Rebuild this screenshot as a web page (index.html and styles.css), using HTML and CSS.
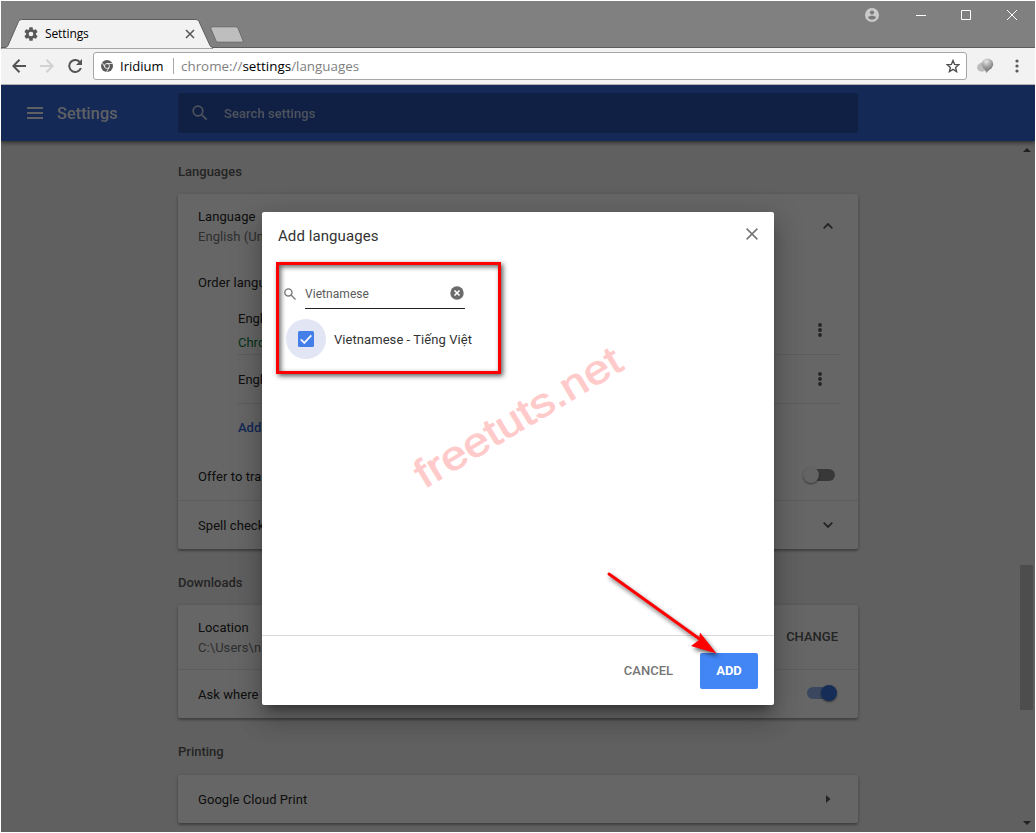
FILE: index.html
```html
<!DOCTYPE html>
<html lang="en">
<head>
<meta charset="utf-8">
<title>Settings</title>
<link rel="stylesheet" href="styles.css">
</head>
<body>
<div class="window">
  <header class="titlebar">
    <div class="tab">
      <svg class="tab-shape" width="212" height="30" viewBox="0 0 212 30"><path d="M0 28.500H4Q6 28.500 7 26.500L17.500 2.500Q18.500 .5 20.500 .5H195Q197 .5 198 2.500L209 26.500Q210 28.500 212 28.500V30H0Z" fill="#f2f2f2" stroke="#5d5d5d"/></svg>
      <svg class="tab-gear" width="18" height="18" viewBox="0 0 24 24" fill="#5a5a5a"><path d="M19.430 12.980c.04-.32.07-.64.07-.98s-.03-.66-.07-.98l2.110-1.650a.5.5 0 0 0 .12-.64l-2-3.460a.5.5 0 0 0-.61-.22l-2.490 1a7.300 7.300 0 0 0-1.690-.98l-.38-2.650A.49.49 0 0 0 14 2h-4a.49.49 0 0 0-.49.42l-.38 2.650c-.61.25-1.170.59-1.690.98l-2.490-1a.49.49 0 0 0-.61.22l-2 3.460a.49.49 0 0 0 .12.64l2.110 1.650a8 8 0 0 0 0 1.960l-2.110 1.650a.5.5 0 0 0-.12.64l2 3.460c.12.22.39.3.61.22l2.490-1c.52.4 1.080.73 1.690.98l.38 2.650c.03.24.24.42.49.42h4c.25 0 .46-.18.49-.42l.38-2.650c.61-.25 1.170-.59 1.690-.98l2.490 1c.23.090.49 0 .61-.22l2-3.460a.5.5 0 0 0-.12-.64zM12 15.500a3.500 3.500 0 1 1 0-7 3.500 3.500 0 0 1 0 7z"/></svg>
      <span class="tab-title">Settings</span>
      <svg class="tab-close" width="10" height="10" viewBox="0 0 10 10" fill="none" stroke="#5a5a5a" stroke-width="1.600"><path d="M1 1l8 8M9 1l-8 8"/></svg>
    </div>
    <svg class="new-tab" width="34" height="18" viewBox="0 0 34 18"><path d="M2.500 .8H26Q27.500 .8 28.200 2.500L33 14.500Q33.500 16.200 31.500 16.200H8Q6.500 16.200 5.800 14.500L.8 2.500Q.4 .8 2.500 .8Z" fill="#bebebe" stroke="#6b6b6b"/></svg>
    <div class="window-controls">
      <svg width="14" height="14" viewBox="0 0 14 14"><circle cx="7" cy="7" r="7" fill="#cacaca"/><circle cx="7" cy="4.500" r="2.100" fill="#7b7b7b"/><path d="M3 9.600C3.500 8.300 5 7.800 7 7.800s3.500.5 4 1.800C10.200 11 8.800 11.700 7 11.700S3.800 11 3 9.600Z" fill="#7b7b7b"/></svg>
      <svg width="10" height="10" viewBox="0 0 10 10" stroke="#fff"><path d="M0 5.500h10"/></svg>
      <svg width="10" height="10" viewBox="0 0 10 10" stroke="#fff" fill="none"><path d="M.5.5h9v9h-9z"/></svg>
      <svg width="10" height="10" viewBox="0 0 10 10" stroke="#fff"><path d="M0 0l10 10M10 0L0 10"/></svg>
    </div>
  </header>
  <div class="toolbar">
    <svg class="nav" width="14" height="14" viewBox="0 0 14 14" fill="none" stroke="#545454" stroke-width="2"><path d="M14 7H1.500M7.500 .8L1.300 7l6.200 6.200"/></svg>
    <svg class="nav" width="14" height="14" viewBox="0 0 14 14" fill="none" stroke="#d2d2d2" stroke-width="2"><path d="M0 7h12.500M6.500 .8L12.700 7l-6.200 6.200"/></svg>
    <svg class="nav" width="14" height="14" viewBox="0 0 14 14"><path d="M12 3.300A6 6 0 1 0 12.900 9" fill="none" stroke="#545454" stroke-width="2"/><path d="M14 0v6H8z" fill="#545454"/></svg>
    <div class="omnibox">
      <svg width="12" height="12" viewBox="0 0 12 12"><circle cx="6" cy="6" r="6" fill="#5a5a5a"/><circle cx="6" cy="6" r="2.500" fill="#5a5a5a" stroke="#fff" stroke-width=".8"/><path d="M6 3.500h5.500M3.900 7.300L1.200 2.700M8.200 7.300L5.500 12" stroke="#fff" stroke-width=".8"/></svg>
      <span class="origin">Iridium</span>
      <span class="url">chrome://<b>settings</b>/languages</span>
      <svg class="star" width="14" height="14" viewBox="0 0 14 14" fill="none" stroke="#4f4f4f" stroke-width="1.400"><path d="M7 1.500l1.600 3.900 4.200.3-3.200 2.700 1 4.200L7 10.400l-3.600 2.200 1-4.200L1.200 5.700l4.200-.3z"/></svg>
    </div>
    <svg class="extension" width="17" height="16" viewBox="0 0 17 16">
      <defs><radialGradient id="ball" cx=".4" cy=".25" r=".8"><stop offset="0" stop-color="#e8e8e8"/><stop offset=".5" stop-color="#aaa"/><stop offset="1" stop-color="#777"/></radialGradient></defs>
      <ellipse cx="5.500" cy="9" rx="5.500" ry="4.500" fill="#bcbcbc" transform="rotate(-20 5.500 9)"/><path d="M7 10l2.500 5 3.500-4z" fill="#898989"/><circle cx="10.500" cy="6.300" r="5.700" fill="url(#ball)"/>
    </svg>
    <svg class="menu-dots" width="4" height="14" viewBox="0 0 4 14" fill="#5a5a5a"><circle cx="2" cy="2" r="1.600"/><circle cx="2" cy="7" r="1.600"/><circle cx="2" cy="12" r="1.600"/></svg>
  </div>

  <div class="page">
    <div class="app-bar">
      <svg class="hamburger" width="16" height="12" viewBox="0 0 16 12" fill="#fff"><path d="M0 0h16v2H0zM0 5h16v2H0zM0 10h16v2H0z"/></svg>
      <h1>Settings</h1>
      <div class="search">
        <svg width="16" height="16" viewBox="0 0 16 16" fill="none" stroke="#fff" stroke-width="1.700"><circle cx="6" cy="6" r="4.800"/><path d="M9.600 9.600l5 5"/></svg>
        <span>Search settings</span>
      </div>
    </div>
    <main class="content">
      <h2>Languages</h2>
      <section class="card">
        <div class="row tall">
          <div><div>Language</div><div class="secondary">English (Un</div></div>
          <svg class="chevron" width="10" height="6" viewBox="0 0 10 6"><path d="M.7 5.300L5 1l4.300 4.300"/></svg>
        </div>
        <div class="row"><span>Order langu</span></div>
        <div class="list">
          <div class="item">
            <div><div>Engl</div><div class="displayed">Chro</div></div>
            <svg class="dots" width="4" height="14" viewBox="0 0 4 14"><circle cx="2" cy="2" r="1.900"/><circle cx="2" cy="7" r="1.900"/><circle cx="2" cy="12" r="1.900"/></svg>
          </div>
          <div class="item">
            <span>Engl</span>
            <svg class="dots" width="4" height="14" viewBox="0 0 4 14"><circle cx="2" cy="2" r="1.900"/><circle cx="2" cy="7" r="1.900"/><circle cx="2" cy="12" r="1.900"/></svg>
          </div>
          <div class="link">Add</div>
        </div>
        <div class="row line-below"><span>Offer to tra</span><span class="toggle"></span></div>
        <div class="row"><span>Spell check</span>
          <svg class="chevron" width="10" height="6" viewBox="0 0 10 6"><path d="M.7.7L5 5 9.300.7"/></svg>
        </div>
      </section>
      <h2>Downloads</h2>
      <section class="card">
        <div class="row tall line-below">
          <div><div>Location</div><div class="secondary">C:\Users\n</div></div>
          <span class="change">CHANGE</span>
        </div>
        <div class="row"><span>Ask where</span><span class="toggle on"></span></div>
      </section>
      <h2 class="last">Printing</h2>
      <section class="card">
        <div class="row"><span>Google Cloud Print</span>
          <svg class="caret" width="5" height="8" viewBox="0 0 5 8" fill="#5a5a5a"><path d="M0 0l4.500 4L0 8z"/></svg>
        </div>
      </section>
    </main>
    <div class="scrollbar">
      <svg width="8" height="4" viewBox="0 0 8 4" fill="#505050"><path d="M0 4l4-4 4 4z"/></svg>
      <div class="thumb"></div>
      <svg width="8" height="4" viewBox="0 0 8 4" fill="#505050"><path d="M0 0l4 4 4-4z"/></svg>
    </div>
    <div class="backdrop"></div>

    <div class="dialog">
      <div class="dialog-head">
        <span>Add languages</span>
        <svg width="12" height="12" viewBox="0 0 12 12" stroke="#757575" stroke-width="1.500"><path d="M.6.6l10.800 10.800M11.400.6L.6 11.400"/></svg>
      </div>
      <div class="dialog-body">
        <div class="highlight">
          <div class="filter">
            <svg class="filter-icon" width="12" height="12" viewBox="0 0 12 12" fill="none" stroke="#757575" stroke-width="1.300"><circle cx="4.400" cy="4.400" r="3.600"/><path d="M7 7l4.500 4.500"/></svg>
            <div class="field"><span>Vietnamese</span>
              <svg width="14" height="14" viewBox="0 0 14 14"><circle cx="7" cy="7" r="6.700" fill="#6b6b6b"/><path d="M4.500 4.500l5 5M9.500 4.500l-5 5" stroke="#fff" stroke-width="1.600"/></svg>
            </div>
          </div>
          <div class="option">
            <span class="ripple"><svg width="16" height="16" viewBox="0 0 16 16"><rect width="16" height="16" rx="1.500" fill="#437ee9"/><path d="M2.800 8.300l3.500 3.500 7-7.500" fill="none" stroke="#f0f3fc" stroke-width="1.900"/></svg></span>
            <span class="option-label">Vietnamese - Tiếng Việt</span>
          </div>
        </div>
      </div>
      <div class="dialog-foot">
        <span class="cancel">CANCEL</span>
        <span class="add">ADD</span>
      </div>
      <svg class="watermark" width="240" height="170" viewBox="0 0 240 170"><text x="0" y="0" textLength="234" lengthAdjust="spacingAndGlyphs" transform="translate(24.500 159) rotate(-31)">freetuts.net</text></svg>
      <svg class="arrow" width="130" height="110" viewBox="0 0 130 110"><path d="M10 10L102 76" stroke="#f00" stroke-width="3" stroke-linecap="round"/><path d="M117.500 89.500L101 68.500 100 76 92 82z" fill="#f00"/></svg>
    </div>
  </div>
</div>
</body>
</html>
```
FILE: styles.css
```css
* { box-sizing: border-box; }
body { margin: 0; background: #fff; font: 13px/20px Roboto, "Liberation Sans", sans-serif; color: #000; overflow: hidden; }
svg { display: block; flex: none; }
.window { display: flex; flex-direction: column; width: 1036px; height: 833px; padding: 1px; }

.titlebar { height: 47px; flex: none; display: flex; align-items: flex-end; background: #808080; border-bottom: 1px solid #5d5d5d; }
.tab { position: relative; width: 212px; height: 29px; margin-bottom: -1px; display: flex; align-items: center; padding: 0 16px 0 22px; font: 12px/16px "Open Sans", "Noto Sans", sans-serif; }
.tab-shape { position: absolute; left: 0; top: 0; }
.tab-gear, .tab-title, .tab-close { position: relative; }
.tab-gear { width: 16px; height: 16px; }
.tab-title { margin-left: 6px; flex: 1; letter-spacing: -.1px; }
.tab-close { margin-right: 2px; }
.new-tab { margin: 0 0 3px -3px; }
.window-controls { margin-left: auto; align-self: flex-start; height: 28px; padding-right: 18px; display: flex; align-items: center; }
.window-controls svg:nth-child(2) { margin-left: 37px; }
.window-controls svg:nth-child(3) { margin-left: 35px; }
.window-controls svg:nth-child(4) { margin-left: 36px; }

.toolbar { height: 37px; flex: none; display: flex; align-items: center; padding: 0 16px 0 11px; background: #f2f2f2; border-bottom: 1px solid #b2b2b2; }
.nav { margin-right: 14px; }
.omnibox { width: 874px; height: 28px; display: flex; align-items: center; margin-left: -3px; padding: 0 6px 0 7px; background: #fff; border: 1px solid #a6a6a6; border-radius: 3px; font: 14px/20px "Open Sans", "Noto Sans", sans-serif; }
.origin { margin-left: 7px; width: 54px; border-right: 1px solid #a9a9a9; line-height: 16px; font-size: 13px; }
.url { margin-left: 7px; color: #808080; font-size: 13.400px; }
.url b { font-weight: 400; color: #000; }
.star { margin-left: auto; }
.extension { margin-left: 10px; }
.menu-dots { margin-left: auto; }

.page { position: relative; flex: 1; min-height: 0; background: #f1f1f1; overflow: hidden; }
.app-bar { height: 56px; display: flex; align-items: center; background: #3367d6; color: #fff; box-shadow: 0 2px 4px rgba(0,0,0,.5); position: relative; padding-left: 26px; }
.app-bar > * { opacity: .9; }
.app-bar h1 { margin: 0 0 0 14px; width: 121px; padding-top: 2px; font-size: 16.400px; font-weight: 500; }
.app-bar .search { width: 680px; height: 40px; display: flex; align-items: center; padding-left: 14px; background: #2a52ab; border-radius: 2px; font-weight: 500; opacity: 1; }
.search svg, .search span { opacity: .7; }
.search span { margin-left: 16px; padding-top: 2px; letter-spacing: .06px; }
.content { width: 680px; margin-left: 177px; color: #262626; }
h2 { margin: 0; font-size: 13px; font-weight: 500; line-height: 20px; color: #5a5a5a; padding: 24px 0 12px; }
.app-bar + .content h2:first-child { padding-top: 21px; }
.content h2.last { padding-bottom: 13px; }
.card { background: #fff; border-radius: 2px; box-shadow: 0 2px 2px rgba(0,0,0,.24), 0 1px 5px rgba(0,0,0,.2); }
.row { display: flex; align-items: center; justify-content: space-between; height: 48px; padding: 0 20px; letter-spacing: .06px; }
.row > span:first-child:not(.toggle) { padding-top: 2px; }
.tall { height: 64px; line-height: 20px; }
.tall > div { padding-top: 1px; }
.line-below { border-bottom: 1px solid #e8e8e8; height: 49px; }
.tall.line-below { height: 65px; }
.secondary { color: #757575; }
.chevron { margin-right: 5px; fill: none; stroke: #5a5a5a; stroke-width: 1.800; }
.list { margin: 0 18px 0 60px; }
.item { height: 49px; display: flex; align-items: center; justify-content: space-between; padding-right: 18px; border-bottom: 1px solid #e8e8e8; line-height: 24px; }
.item > :first-child { padding-top: 2px; }
.displayed { color: #0b8043; }
.dots { fill: #5a5a5a; }
.link { height: 48px; line-height: 47px; color: #3367d6; font-weight: 500; }
.toggle { position: relative; width: 28px; height: 12px; margin: -2px 3px 0 0; border-radius: 6px; background: #8c8c8c; }
.toggle::after { content: ""; position: absolute; left: -4px; top: -2px; width: 16px; height: 16px; border-radius: 50%; background: #fafafa; box-shadow: 0 1px 2px rgba(0,0,0,.5); }
.toggle.on { margin-right: 3px; background: #92b1ea; }
.toggle.on::after { left: 14px; background: #3972dd; }
.change { font-weight: 500; color: #5a5a5a; letter-spacing: 0; margin-top: -1px; line-height: 19px; }
.caret { margin-right: 7px; }
.scrollbar { position: absolute; right: 1px; top: 56px; width: 15px; height: 691px; display: flex; flex-direction: column; align-items: center; padding: 7px 0 7px; }
.thumb { width: 13px; height: 145px; margin: 413px 0 auto; background: #c1c1c1; }
.backdrop { position: absolute; inset: 0; background: rgba(0,0,0,.6); }

.dialog { position: absolute; left: 261px; top: 127px; width: 512px; height: 493px; display: flex; flex-direction: column; background: #fff; border-radius: 2px; box-shadow: 0 16px 24px 2px rgba(0,0,0,.14), 0 6px 30px 5px rgba(0,0,0,.12), 0 8px 10px -5px rgba(0,0,0,.4); color: #333; }
.dialog-head { height: 50px; display: flex; align-items: center; justify-content: space-between; padding: 0 16px; font-size: 15px; letter-spacing: .08px; }
.dialog-head span { margin-top: -2px; }
.dialog-head svg { margin-top: -6px; }
.dialog-body { flex: 1; padding-left: 14px; }
.highlight { width: 225px; height: 112px; border: 3px solid #f00; box-shadow: 2px 2px 5px rgba(0,0,0,.65), inset 2px 2px 5px rgba(0,0,0,.6); padding: 14px 0 0 5px; }
.filter { display: flex; align-items: center; height: 30px; }
.filter-icon { margin: -1px 9px 0 0; }
.field { width: 160px; height: 30px; display: flex; align-items: center; justify-content: space-between; border-bottom: 1px solid #212121; font-size: 12px; letter-spacing: .06px; color: #5a5a5a; padding: 0 1px 1px 0; }
.field span { padding-top: 2px; }
.option { display: flex; align-items: center; margin: 10px 0 0 2px; }
.option-label { padding-top: 2px; letter-spacing: .06px; }
.ripple { width: 40px; height: 40px; border-radius: 50%; background: #e1e5f4; display: flex; align-items: center; justify-content: center; margin-right: 8px; }
.dialog-foot { height: 70px; display: flex; align-items: center; justify-content: flex-end; padding-right: 16px; border-top: 1px solid #dadada; font-weight: 500; }
.cancel { color: #757575; margin-right: 27px; }
.add { width: 58px; height: 36px; line-height: 36px; text-align: center; background: #4285f4; color: #fff; border-radius: 2px; font-weight: 700; }
.watermark { position: absolute; left: 138px; top: 118px; overflow: visible; font: 40px "Liberation Sans", Arial, sans-serif; fill: #ffcaca; stroke: #ffcaca; stroke-width: .9; }
.arrow { position: absolute; left: 337px; top: 352px; overflow: visible; fill: none; filter: drop-shadow(2px 3px 2px rgba(0,0,0,.6)); }
```
